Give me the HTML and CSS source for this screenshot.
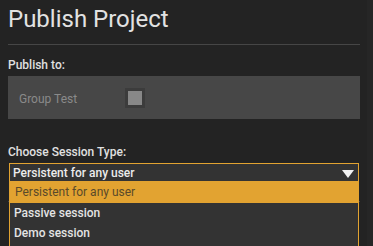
FILE: index.html
```html
<!DOCTYPE html>
<html>
<head>
<meta charset="utf-8">
<link rel="stylesheet" href="styles.css">
</head>
<body>
<div class="page">
  <h1 class="title">Publish Project</h1>
  <hr class="rule">
  <div class="label">Publish to:</div>
  <div class="targets">
    <span class="target-name">Group Test</span>
    <span class="check"><span class="check-inner"></span></span>
  </div>
  <div class="label label-session">Choose Session Type:</div>
  <div class="select-wrap">
    <div class="select">
      <span class="select-value">Persistent for any user</span>
      <svg class="arrow" width="12" height="8" viewBox="0 0 12 8"><polygon points="0,0 12,0 6,8" fill="#f2f2f2"/></svg>
    </div>
    <ul class="options">
      <li class="option active">Persistent for any user</li>
      <li class="option">Passive session</li>
      <li class="option">Demo session</li>
      <li class="option"></li>
    </ul>
  </div>
  <hr class="rule rule-under">
</div>
<div class="scroll-strip"></div>
</body>
</html>
```

FILE: styles.css
```css
html, body {
  margin: 0;
  padding: 0;
  background: #232323;
  height: 100%;
  overflow: hidden;
}
body {
  font-family: Roboto, "Liberation Sans", Arial, sans-serif;
  color: #dcdcdc;
}
.page {
  padding: 0 13px 0 8px;
  width: 352px;
}
.title {
  margin: 5px 0 0 0;
  font-size: 24px;
  font-weight: 400;
  line-height: 28px;
  color: #e2e2e2;
}
.rule {
  margin: 11px 0 0 0;
  border: 0;
  height: 1px;
  background: #464646;
}
.label {
  margin-top: 13px;
  font-size: 12px;
  line-height: 14px;
  font-weight: 500;
  color: #e0e0e0;
}
.targets {
  margin-top: 4px;
  height: 43px;
  background: #474747;
  display: flex;
  align-items: center;
  padding-left: 11px;
}
.target-name {
  width: 106px;
  font-size: 12px;
  color: #8a8a8a;
  margin-top: 2px;
}
.check {
  width: 20px;
  height: 20px;
  background: #3c3c3c;
  display: flex;
  align-items: center;
  justify-content: center;
  margin-top: 1px;
}
.check-inner {
  width: 14px;
  height: 14px;
  background: #888888;
}
.label-session {
  margin-top: 26px;
}
.select-wrap {
  position: relative;
  margin-top: 4px;
  margin-left: 1px;
  width: 350px;
}
.select {
  height: 17px;
  border: 1px solid #e2a331;
  background: #333333;
  display: flex;
  align-items: center;
  justify-content: space-between;
  padding: 0 4px 0 3px;
}
.select-value {
  font-size: 12px;
  font-weight: 500;
  color: #ececec;
}
.arrow {
  display: block;
  margin-top: 3px;
}
.options {
  position: absolute;
  left: 0;
  right: 0;
  top: 19px;
  margin: 0;
  padding: 0;
  list-style: none;
  background: #333333;
  border-left: 1px solid #e2a331;
  border-right: 1px solid #e2a331;
  z-index: 2;
}
.option {
  height: 20px;
  line-height: 20px;
  padding-left: 4px;
  font-size: 12px;
  font-weight: 500;
  color: #e4e4e4;
}
.option.active {
  background: #e2a331;
  color: #5a4a2a;
  font-weight: 400;
  padding-left: 5px;
  height: 21px;
  line-height: 21px;
}
.rule-under {
  margin-top: 19px;
}
.scroll-strip {
  position: fixed;
  top: 0;
  right: 0;
  width: 6px;
  height: 100%;
  background: #262626;
}
```
